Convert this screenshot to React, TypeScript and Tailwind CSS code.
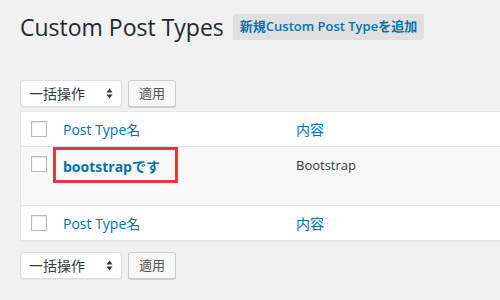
import React from "react";

const font = "font-['Open_Sans','Noto_Sans_CJK_JP',sans-serif]";

function Checkbox() {
  return <div className="w-[16px] h-[16px] border border-[#b4b9be] bg-white shadow-[inset_0_1px_2px_rgba(0,0,0,0.1)] shrink-0" />;
}

function BulkBar() {
  return (
    <div className="flex items-center gap-[6px]">
      <div className="w-[102px] h-[27px] border border-[#ddd] rounded-[4px] bg-white flex items-center justify-between pl-[8px] pr-[8px] shadow-[0_1px_1px_rgba(0,0,0,0.05)]">
        <span className="text-[14px] text-[#32373c] leading-none">一括操作</span>
        <svg width="7" height="11" viewBox="0 0 7 11">
          <path d="M3.5 0.5 L6.5 4.5 H0.5 Z" fill="#333" />
          <path d="M3.5 10.5 L6.5 6.5 H0.5 Z" fill="#333" />
        </svg>
      </div>
      <div className="w-[48px] h-[27px] border border-[#ccc] rounded-[3px] bg-[#f7f7f7] shadow-[0_1px_0_#ccc] flex items-center justify-center">
        <span className="text-[13px] text-[#555] leading-none">適用</span>
      </div>
    </div>
  );
}

function HeadRow({ border }: { border: "b" | "t" }) {
  return (
    <div className={`flex items-center h-[35px] bg-white ${border === "b" ? "border-b border-[#e1e1e1]" : "border-t border-[#e1e1e1]"}`}>
      <div className="w-[42px] pl-[10px] flex items-center">
        <Checkbox />
      </div>
      <div className="w-[233px] text-[14px] text-[#0073aa]">Post Type名</div>
      <div className="text-[14px] text-[#0073aa]">内容</div>
    </div>
  );
}

export default function App() {
  return (
    <div className={`w-[500px] h-[300px] overflow-hidden bg-[#f1f1f1] ${font}`}>
      <div className="pl-[20px] pt-[12px]">
        <div className="flex items-center h-[30px]">
          <h1 className="text-[23px] leading-[29px] text-[#23282d] font-normal">Custom Post Types</h1>
          <div className="ml-[9px] h-[26px] px-[7px] flex items-center bg-[#e0e0e0] rounded-[2px] text-[13px] font-semibold text-[#0073aa]">
            新規Custom Post Typeを追加
          </div>
        </div>
        <div className="mt-[38px]">
          <BulkBar />
        </div>
        <div className="mt-[4px] w-[520px] border border-[#e5e5e5] bg-white shadow-[0_1px_1px_rgba(0,0,0,0.04)]">
          <HeadRow border="b" />
          <div className="h-[58px] bg-[#f9f9f9] flex items-start">
            <div className="w-[42px] pl-[10px] pt-[9px] flex">
              <Checkbox />
            </div>
            <div className="w-[233px] relative pt-[7px]">
              <span className="text-[14px] font-bold text-[#0073aa]">bootstrapです</span>
              <div className="absolute left-[-10px] top-[0px] w-[125px] h-[36px] border-[3px] border-[#e53935]" />
            </div>
            <div className="pt-[9px] text-[13px] text-[#32373c]">Bootstrap</div>
          </div>
          <HeadRow border="t" />
        </div>
        <div className="mt-[11px]">
          <BulkBar />
        </div>
      </div>
    </div>
  );
}
